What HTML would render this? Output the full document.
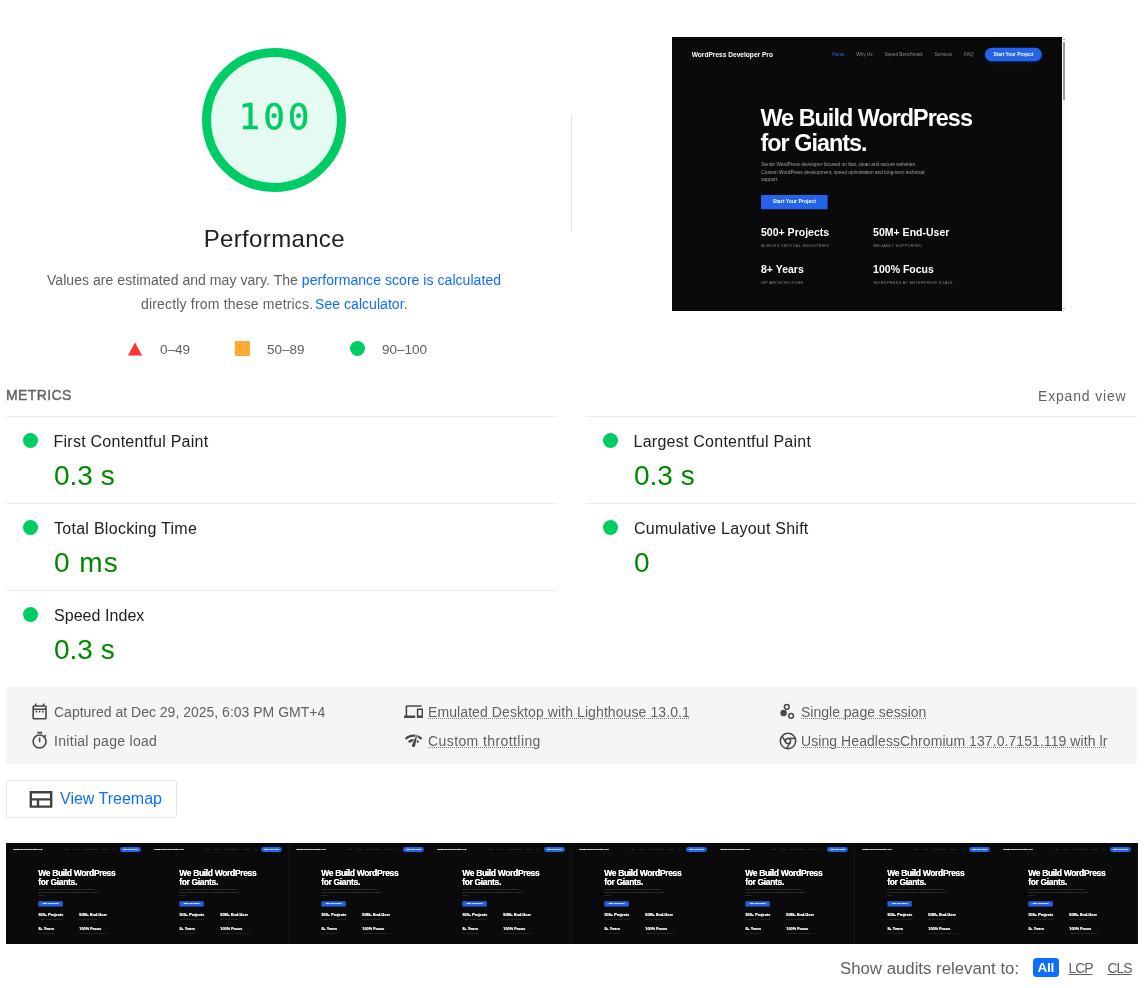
<!DOCTYPE html>
<html lang="en">
<head>
<meta charset="utf-8">
<title>Lighthouse Report</title>
<style>
html,body{margin:0;padding:0;background:#fff;}
body{width:1144px;height:988px;position:relative;overflow:hidden;font-family:"Liberation Sans",sans-serif;color:#212121;}
.t{position:absolute;white-space:nowrap;line-height:1;margin:0;padding:0;}
.abs{position:absolute;}
a{text-decoration:none;color:#0d6efd;}

/* gauge */
#gauge{left:202px;top:48px;width:144px;height:144px;}
#score{left:203.5px;width:144px;text-align:center;top:98.5px;font-family:"DejaVu Sans Mono","Liberation Mono",monospace;font-size:36px;letter-spacing:3px;color:#0c6;-webkit-text-stroke:.35px #0c6;}
#title{left:174.3px;width:200px;text-align:center;top:227px;font-size:24px;letter-spacing:.35px;color:#212121;}
.desc{font-size:14px;color:#616161;letter-spacing:.05px;}
.leg{font-size:13.5px;color:#616161;top:342.5px;}

/* metrics */
.hdr{font-size:14px;color:#616161;letter-spacing:.4px;font-weight:normal;-webkit-text-stroke:.4px #616161;}
.line{position:absolute;height:1px;background:#ebebeb;}
.dot{position:absolute;width:15px;height:15px;border-radius:50%;background:#0c6;}
.mt{font-size:16px;color:#212121;}
.mv{font-size:28px;color:#080;}

/* meta */
#meta{left:6px;top:687px;width:1131px;height:77px;background:#f5f5f5;border-radius:3px;}
.mi{font-size:14px;color:#616161;}
.mi u{text-decoration:underline dotted #7a7a7a;text-decoration-thickness:1px;text-underline-offset:1px;}

.ic{width:19.2px;height:19.2px;fill:#474747;}
/* site mock */
.shot{position:absolute;overflow:hidden;background:#0a0a0a;}
.site{position:absolute;left:0;top:0;width:1335px;height:940px;background:#0a0a0a;transform-origin:0 0;font-family:"Liberation Sans",sans-serif;}
.site .t{color:#fff;}
.site .nav{position:absolute;left:0;top:0;width:1335px;height:119px;border-bottom:1px solid #1c1c1c;}
.site .lnk{font-size:16px;color:#8c8c8c;top:52px;}
.site .pill{position:absolute;left:1072px;top:37px;width:195px;height:46px;border-radius:23px;background:#2563eb;box-shadow:0 4px 12px rgba(37,99,235,.22);}
.site .h1{font-size:80px;font-weight:bold;letter-spacing:-3.3px;left:303px;}
.site .p{font-size:16.35px;color:#a3a3a3;left:306px;}
.site .btn{position:absolute;left:305px;top:541px;width:228px;height:49px;background:#2563eb;border-radius:2px;}
.site .st{font-size:36px;font-weight:bold;}
.site .sl{font-size:13px;color:#8a8a8a;letter-spacing:1.25px;}
.big .site{transform:scale(.2919);}
.film .site{transform:scale(.1064,.1077);}
.film .t{text-shadow:0 0 4px currentColor;}
.film .p{color:#6a6a6a;text-shadow:none;}
.film .sl{color:#585858;text-shadow:none;}
.film .lnk{color:#5c5c5c;text-shadow:none;}
</style>
</head>
<body>
<div id="root" style="position:absolute;left:0;top:0;width:1144px;height:988px;will-change:transform;">

<!-- gauge -->
<svg id="gauge" class="abs" viewBox="0 0 120 120"><circle cx="60" cy="60" r="56.2" fill="#e5faf0" stroke="#0c6" stroke-width="7.6"/></svg>
<div id="score" class="t">100</div>
<div id="title" class="t">Performance</div>
<div class="t desc" style="left:47px;top:273px;">Values are estimated and may vary. The <a>performance score is calculated</a></div>
<div class="t desc" style="left:141px;top:297px;letter-spacing:.18px;">directly from these metrics.</div>
<div class="t desc" style="left:315px;top:297px;"><a>See calculator.</a></div>

<!-- legend -->
<svg class="abs" style="left:128px;top:342px;width:14px;height:14px;" viewBox="0 0 14 14"><polygon points="7,0.3 14,13.6 0,13.6" fill="#f33"/></svg>
<div class="t leg" style="left:160px;">0–49</div>
<div class="abs" style="left:235px;top:341px;width:15px;height:15px;background:#fa3;"></div>
<div class="t leg" style="left:267px;">50–89</div>
<div class="abs" style="left:350px;top:341px;width:15px;height:15px;border-radius:50%;background:#0c6;"></div>
<div class="t leg" style="left:382px;">90–100</div>

<!-- divider -->
<div class="abs" style="left:571px;top:116px;width:1px;height:115px;background:#e0e0e0;"></div>

<!-- big screenshot -->
<div class="shot big" style="left:672px;top:37px;width:389.7px;height:273.8px;">
<div class="site">
<div class="nav"></div>
<div class="t" style="left:67.5px;top:49px;font-size:22.6px;font-weight:bold;">WordPress Developer Pro</div>
<div class="t lnk" style="left:549px;color:#2f6fe0;">Home</div>
<div class="t lnk" style="left:631px;">Why Us</div>
<div class="t lnk" style="left:728px;">Speed Benchmark</div>
<div class="t lnk" style="left:899px;">Services</div>
<div class="t lnk" style="left:1001px;">FAQ</div>
<div class="pill"></div>
<div class="t" style="left:1072px;width:195px;text-align:center;top:51.5px;font-size:16.3px;font-weight:bold;">Start Your Project</div>
<div class="t h1" style="top:238.5px;">We Build WordPress</div>
<div class="t h1" style="top:323px;">for Giants.</div>
<div class="t p" style="top:427px;">Senior WordPress developer focused on fast, clean and secure websites.</div>
<div class="t p" style="top:454px;">Custom WordPress development, speed optimization and long-term technical</div>
<div class="t p" style="top:481px;">support.</div>
<div class="btn"></div>
<div class="t" style="left:305px;width:228px;text-align:center;top:556px;font-size:17.6px;font-weight:bold;">Start Your Project</div>
<div class="t st" style="left:305px;top:651px;">500+ Projects</div>
<div class="t st" style="left:689px;top:651px;">50M+ End-User</div>
<div class="t sl" style="left:306px;top:708px;">ACROSS CRITICAL INDUSTRIES</div>
<div class="t sl" style="left:690px;top:708px;">RELIABLY SUPPORTED</div>
<div class="t st" style="left:305px;top:778px;">8+ Years</div>
<div class="t st" style="left:689px;top:778px;">100% Focus</div>
<div class="t sl" style="left:306px;top:834px;">WP ARCHITECTURE</div>
<div class="t sl" style="left:690px;top:834px;">WORDPRESS AT ENTERPRISE SCALE</div>
</div>
</div>
<div class="abs" style="left:1062px;top:37px;width:4.3px;height:274px;background:#fcfcfc;"></div>
<div class="abs" style="left:1062.8px;top:42px;width:2.3px;height:57.6px;background:#9a9a9a;"></div>
<div class="abs" style="left:1063.3px;top:39px;width:1.4px;height:1px;background:#a0a0a0;"></div>
<div class="abs" style="left:1063.3px;top:307.5px;width:1.4px;height:1px;background:#a0a0a0;"></div>

<!-- metrics -->
<div class="t hdr" style="left:6px;top:388px;">METRICS</div>
<div class="t" style="left:1038px;top:389px;font-size:14px;color:#616161;letter-spacing:.83px;">Expand view</div>

<div class="line" style="left:6px;top:416px;width:551px;"></div>
<div class="line" style="left:6px;top:503px;width:551px;"></div>
<div class="line" style="left:6px;top:590px;width:551px;"></div>
<div class="line" style="left:586px;top:416px;width:551px;"></div>
<div class="line" style="left:586px;top:503px;width:551px;"></div>

<div class="dot" style="left:23px;top:433px;"></div>
<div class="t mt" style="left:53.5px;top:434px;letter-spacing:.25px;">First Contentful Paint</div>
<div class="t mv" style="left:54px;top:462px;">0.3 s</div>

<div class="dot" style="left:23px;top:520px;"></div>
<div class="t mt" style="left:54px;top:521px;letter-spacing:.28px;">Total Blocking Time</div>
<div class="t mv" style="left:54px;top:549px;letter-spacing:1px;">0 ms</div>

<div class="dot" style="left:23px;top:607px;"></div>
<div class="t mt" style="left:54px;top:608px;letter-spacing:.05px;">Speed Index</div>
<div class="t mv" style="left:54px;top:636px;">0.3 s</div>

<div class="dot" style="left:603px;top:433px;"></div>
<div class="t mt" style="left:633.5px;top:434px;letter-spacing:.25px;">Largest Contentful Paint</div>
<div class="t mv" style="left:634px;top:462px;">0.3 s</div>

<div class="dot" style="left:603px;top:520px;"></div>
<div class="t mt" style="left:634px;top:521px;letter-spacing:.24px;">Cumulative Layout Shift</div>
<div class="t mv" style="left:634px;top:549px;">0</div>

<!-- meta -->
<div id="meta" class="abs"></div>
<div class="t mi" style="left:54px;top:705px;">Captured at Dec 29, 2025, 6:03 PM GMT+4</div>
<div class="t mi" style="left:54px;top:734px;letter-spacing:.3px;">Initial page load</div>
<div class="t mi" style="left:428px;top:705px;letter-spacing:.09px;"><u>Emulated Desktop with Lighthouse 13.0.1</u></div>
<div class="t mi" style="left:428px;top:734px;letter-spacing:.41px;"><u>Custom throttling</u></div>
<div class="t mi" style="left:801px;top:705px;"><u>Single page session</u></div>
<div class="t mi" style="left:801px;top:734px;letter-spacing:.07px;"><u>Using HeadlessChromium 137.0.7151.119 with lr</u></div>

<!-- meta icons -->
<svg class="abs ic" style="left:29.8px;top:701.5px;" viewBox="0 0 24 24"><path d="M7 11h2v2H7v-2zm14-5v14c0 1.1-.9 2-2 2H5c-1.1 0-2-.9-2-2l.01-14c0-1.1.88-2 1.99-2h1V2h2v2h8V2h2v2h1c1.1 0 2 .9 2 2zM5 8h14V6H5v2zm14 12V10H5v10h14zm-4-7h2v-2h-2v2zm-4 0h2v-2h-2v2z"/></svg>
<svg class="abs ic" style="left:30.1px;top:731.1px;" viewBox="0 0 24 24"><path d="M15 1H9v2h6V1zm-4 13h2V8h-2v6zm8.03-6.61l1.42-1.42c-.43-.51-.9-.99-1.41-1.41l-1.42 1.42C16.07 4.74 14.12 4 12 4c-4.97 0-9 4.03-9 9s4.02 9 9 9 9-4.03 9-9c0-2.12-.74-4.07-1.97-5.61zM12 20c-3.87 0-7-3.13-7-7s3.13-7 7-7 7 3.13 7 7-3.13 7-7 7z"/></svg>
<svg class="abs ic" style="left:404.1px;top:701.9px;" viewBox="0 0 24 24"><path d="M4 6h18V4H4c-1.1 0-2 .9-2 2v11H0v3h14v-3H4V6zm19 2h-6c-.55 0-1 .45-1 1v10c0 .55.45 1 1 1h6c.55 0 1-.45 1-1V9c0-.55-.45-1-1-1zm-1 9h-4v-7h4v7z"/></svg>
<svg class="abs ic" style="left:404px;top:730.6px;" viewBox="0 0 24 24"><path d="M15.9 5c-.17 0-.32.09-.41.23l-.07.15-5.18 11.65c-.16.29-.26.61-.26.96 0 1.11.9 2.01 2.01 2.01.96 0 1.77-.68 1.96-1.59l.01-.03L16.4 5.5c0-.28-.22-.5-.5-.5zM1 9l2 2c2.88-2.88 6.79-4.08 10.53-3.62l1.19-2.68C9.89 3.84 4.74 5.27 1 9zm20 2l2-2c-1.64-1.64-3.55-2.82-5.59-3.57l-.53 2.82c1.5.62 2.9 1.53 4.12 2.75zm-4 4l2-2c-.8-.8-1.7-1.42-2.66-1.89l-.55 2.92c.42.27.83.59 1.21.97zM5 13l2 2c1.13-1.13 2.56-1.79 4.03-2l1.28-2.88c-2.63-.08-5.3.87-7.31 2.88z"/></svg>
<svg class="abs" style="left:778px;top:701px;width:20px;height:20px;" viewBox="0 0 20 20"><circle cx="8.8" cy="5.8" r="2.4" fill="none" stroke="#474747" stroke-width="1.5"/><circle cx="5.6" cy="12" r="3.2" fill="#474747"/><circle cx="13.1" cy="14.8" r="2.4" fill="none" stroke="#474747" stroke-width="1.5"/></svg>
<svg class="abs" style="left:778.4px;top:731.1px;width:20px;height:20px;" viewBox="-10 -10 20 20" fill="none" stroke="#474747" stroke-width="1.5"><circle r="7.7"/><circle r="2.6"/><path d="M0-2.6H7.2"/><path d="M0-2.6H7.2" transform="rotate(120)"/><path d="M0-2.6H7.2" transform="rotate(240)"/></svg>

<!-- treemap button -->
<div class="abs" style="left:6px;top:780px;width:169px;height:35.5px;border:1px solid #e4e4e4;border-radius:3px;background:#fff;"></div>
<svg class="abs" style="left:25.8px;top:784.6px;width:28.8px;height:28.8px;" viewBox="0 0 24 24"><path fill="#424242" d="M3 5v14h19V5H3zm2 2h15v4H5V7zm0 10v-4h4v4H5zm6 0v-4h9v4h-9z"/></svg>
<div class="t" style="left:60px;top:791px;font-size:16px;color:#0d6efd;">View Treemap</div>

<!-- filmstrip -->
<div class="abs" style="left:6px;top:843px;width:1132px;height:100.7px;background:#131313;"></div>
<div class="shot film" style="left:6.00px;top:843px;width:140.75px;height:100.7px;"><div class="site">
<div class="nav"></div>
<div class="t" style="left:67.5px;top:49px;font-size:22.6px;font-weight:bold;">WordPress Developer Pro</div>
<div class="t lnk" style="left:549px;color:#2f6fe0;">Home</div>
<div class="t lnk" style="left:631px;">Why Us</div>
<div class="t lnk" style="left:728px;">Speed Benchmark</div>
<div class="t lnk" style="left:899px;">Services</div>
<div class="t lnk" style="left:1001px;">FAQ</div>
<div class="pill"></div>
<div class="t" style="left:1072px;width:195px;text-align:center;top:51.5px;font-size:16.3px;font-weight:bold;">Start Your Project</div>
<div class="t h1" style="top:238.5px;">We Build WordPress</div>
<div class="t h1" style="top:323px;">for Giants.</div>
<div class="t p" style="top:427px;">Senior WordPress developer focused on fast, clean and secure websites.</div>
<div class="t p" style="top:454px;">Custom WordPress development, speed optimization and long-term technical</div>
<div class="t p" style="top:481px;">support.</div>
<div class="btn"></div>
<div class="t" style="left:305px;width:228px;text-align:center;top:556px;font-size:17.6px;font-weight:bold;">Start Your Project</div>
<div class="t st" style="left:305px;top:651px;">500+ Projects</div>
<div class="t st" style="left:689px;top:651px;">50M+ End-User</div>
<div class="t sl" style="left:306px;top:708px;">ACROSS CRITICAL INDUSTRIES</div>
<div class="t sl" style="left:690px;top:708px;">RELIABLY SUPPORTED</div>
<div class="t st" style="left:305px;top:778px;">8+ Years</div>
<div class="t st" style="left:689px;top:778px;">100% Focus</div>
<div class="t sl" style="left:306px;top:834px;">WP ARCHITECTURE</div>
<div class="t sl" style="left:690px;top:834px;">WORDPRESS AT ENTERPRISE SCALE</div>
</div></div>
<div class="shot film" style="left:146.75px;top:843px;width:140.75px;height:100.7px;"><div class="site">
<div class="nav"></div>
<div class="t" style="left:67.5px;top:49px;font-size:22.6px;font-weight:bold;">WordPress Developer Pro</div>
<div class="t lnk" style="left:549px;color:#2f6fe0;">Home</div>
<div class="t lnk" style="left:631px;">Why Us</div>
<div class="t lnk" style="left:728px;">Speed Benchmark</div>
<div class="t lnk" style="left:899px;">Services</div>
<div class="t lnk" style="left:1001px;">FAQ</div>
<div class="pill"></div>
<div class="t" style="left:1072px;width:195px;text-align:center;top:51.5px;font-size:16.3px;font-weight:bold;">Start Your Project</div>
<div class="t h1" style="top:238.5px;">We Build WordPress</div>
<div class="t h1" style="top:323px;">for Giants.</div>
<div class="t p" style="top:427px;">Senior WordPress developer focused on fast, clean and secure websites.</div>
<div class="t p" style="top:454px;">Custom WordPress development, speed optimization and long-term technical</div>
<div class="t p" style="top:481px;">support.</div>
<div class="btn"></div>
<div class="t" style="left:305px;width:228px;text-align:center;top:556px;font-size:17.6px;font-weight:bold;">Start Your Project</div>
<div class="t st" style="left:305px;top:651px;">500+ Projects</div>
<div class="t st" style="left:689px;top:651px;">50M+ End-User</div>
<div class="t sl" style="left:306px;top:708px;">ACROSS CRITICAL INDUSTRIES</div>
<div class="t sl" style="left:690px;top:708px;">RELIABLY SUPPORTED</div>
<div class="t st" style="left:305px;top:778px;">8+ Years</div>
<div class="t st" style="left:689px;top:778px;">100% Focus</div>
<div class="t sl" style="left:306px;top:834px;">WP ARCHITECTURE</div>
<div class="t sl" style="left:690px;top:834px;">WORDPRESS AT ENTERPRISE SCALE</div>
</div></div>
<div class="shot film" style="left:289.00px;top:843px;width:140.75px;height:100.7px;"><div class="site">
<div class="nav"></div>
<div class="t" style="left:67.5px;top:49px;font-size:22.6px;font-weight:bold;">WordPress Developer Pro</div>
<div class="t lnk" style="left:549px;color:#2f6fe0;">Home</div>
<div class="t lnk" style="left:631px;">Why Us</div>
<div class="t lnk" style="left:728px;">Speed Benchmark</div>
<div class="t lnk" style="left:899px;">Services</div>
<div class="t lnk" style="left:1001px;">FAQ</div>
<div class="pill"></div>
<div class="t" style="left:1072px;width:195px;text-align:center;top:51.5px;font-size:16.3px;font-weight:bold;">Start Your Project</div>
<div class="t h1" style="top:238.5px;">We Build WordPress</div>
<div class="t h1" style="top:323px;">for Giants.</div>
<div class="t p" style="top:427px;">Senior WordPress developer focused on fast, clean and secure websites.</div>
<div class="t p" style="top:454px;">Custom WordPress development, speed optimization and long-term technical</div>
<div class="t p" style="top:481px;">support.</div>
<div class="btn"></div>
<div class="t" style="left:305px;width:228px;text-align:center;top:556px;font-size:17.6px;font-weight:bold;">Start Your Project</div>
<div class="t st" style="left:305px;top:651px;">500+ Projects</div>
<div class="t st" style="left:689px;top:651px;">50M+ End-User</div>
<div class="t sl" style="left:306px;top:708px;">ACROSS CRITICAL INDUSTRIES</div>
<div class="t sl" style="left:690px;top:708px;">RELIABLY SUPPORTED</div>
<div class="t st" style="left:305px;top:778px;">8+ Years</div>
<div class="t st" style="left:689px;top:778px;">100% Focus</div>
<div class="t sl" style="left:306px;top:834px;">WP ARCHITECTURE</div>
<div class="t sl" style="left:690px;top:834px;">WORDPRESS AT ENTERPRISE SCALE</div>
</div></div>
<div class="shot film" style="left:429.75px;top:843px;width:140.75px;height:100.7px;"><div class="site">
<div class="nav"></div>
<div class="t" style="left:67.5px;top:49px;font-size:22.6px;font-weight:bold;">WordPress Developer Pro</div>
<div class="t lnk" style="left:549px;color:#2f6fe0;">Home</div>
<div class="t lnk" style="left:631px;">Why Us</div>
<div class="t lnk" style="left:728px;">Speed Benchmark</div>
<div class="t lnk" style="left:899px;">Services</div>
<div class="t lnk" style="left:1001px;">FAQ</div>
<div class="pill"></div>
<div class="t" style="left:1072px;width:195px;text-align:center;top:51.5px;font-size:16.3px;font-weight:bold;">Start Your Project</div>
<div class="t h1" style="top:238.5px;">We Build WordPress</div>
<div class="t h1" style="top:323px;">for Giants.</div>
<div class="t p" style="top:427px;">Senior WordPress developer focused on fast, clean and secure websites.</div>
<div class="t p" style="top:454px;">Custom WordPress development, speed optimization and long-term technical</div>
<div class="t p" style="top:481px;">support.</div>
<div class="btn"></div>
<div class="t" style="left:305px;width:228px;text-align:center;top:556px;font-size:17.6px;font-weight:bold;">Start Your Project</div>
<div class="t st" style="left:305px;top:651px;">500+ Projects</div>
<div class="t st" style="left:689px;top:651px;">50M+ End-User</div>
<div class="t sl" style="left:306px;top:708px;">ACROSS CRITICAL INDUSTRIES</div>
<div class="t sl" style="left:690px;top:708px;">RELIABLY SUPPORTED</div>
<div class="t st" style="left:305px;top:778px;">8+ Years</div>
<div class="t st" style="left:689px;top:778px;">100% Focus</div>
<div class="t sl" style="left:306px;top:834px;">WP ARCHITECTURE</div>
<div class="t sl" style="left:690px;top:834px;">WORDPRESS AT ENTERPRISE SCALE</div>
</div></div>
<div class="shot film" style="left:572.00px;top:843px;width:140.75px;height:100.7px;"><div class="site">
<div class="nav"></div>
<div class="t" style="left:67.5px;top:49px;font-size:22.6px;font-weight:bold;">WordPress Developer Pro</div>
<div class="t lnk" style="left:549px;color:#2f6fe0;">Home</div>
<div class="t lnk" style="left:631px;">Why Us</div>
<div class="t lnk" style="left:728px;">Speed Benchmark</div>
<div class="t lnk" style="left:899px;">Services</div>
<div class="t lnk" style="left:1001px;">FAQ</div>
<div class="pill"></div>
<div class="t" style="left:1072px;width:195px;text-align:center;top:51.5px;font-size:16.3px;font-weight:bold;">Start Your Project</div>
<div class="t h1" style="top:238.5px;">We Build WordPress</div>
<div class="t h1" style="top:323px;">for Giants.</div>
<div class="t p" style="top:427px;">Senior WordPress developer focused on fast, clean and secure websites.</div>
<div class="t p" style="top:454px;">Custom WordPress development, speed optimization and long-term technical</div>
<div class="t p" style="top:481px;">support.</div>
<div class="btn"></div>
<div class="t" style="left:305px;width:228px;text-align:center;top:556px;font-size:17.6px;font-weight:bold;">Start Your Project</div>
<div class="t st" style="left:305px;top:651px;">500+ Projects</div>
<div class="t st" style="left:689px;top:651px;">50M+ End-User</div>
<div class="t sl" style="left:306px;top:708px;">ACROSS CRITICAL INDUSTRIES</div>
<div class="t sl" style="left:690px;top:708px;">RELIABLY SUPPORTED</div>
<div class="t st" style="left:305px;top:778px;">8+ Years</div>
<div class="t st" style="left:689px;top:778px;">100% Focus</div>
<div class="t sl" style="left:306px;top:834px;">WP ARCHITECTURE</div>
<div class="t sl" style="left:690px;top:834px;">WORDPRESS AT ENTERPRISE SCALE</div>
</div></div>
<div class="shot film" style="left:712.75px;top:843px;width:140.75px;height:100.7px;"><div class="site">
<div class="nav"></div>
<div class="t" style="left:67.5px;top:49px;font-size:22.6px;font-weight:bold;">WordPress Developer Pro</div>
<div class="t lnk" style="left:549px;color:#2f6fe0;">Home</div>
<div class="t lnk" style="left:631px;">Why Us</div>
<div class="t lnk" style="left:728px;">Speed Benchmark</div>
<div class="t lnk" style="left:899px;">Services</div>
<div class="t lnk" style="left:1001px;">FAQ</div>
<div class="pill"></div>
<div class="t" style="left:1072px;width:195px;text-align:center;top:51.5px;font-size:16.3px;font-weight:bold;">Start Your Project</div>
<div class="t h1" style="top:238.5px;">We Build WordPress</div>
<div class="t h1" style="top:323px;">for Giants.</div>
<div class="t p" style="top:427px;">Senior WordPress developer focused on fast, clean and secure websites.</div>
<div class="t p" style="top:454px;">Custom WordPress development, speed optimization and long-term technical</div>
<div class="t p" style="top:481px;">support.</div>
<div class="btn"></div>
<div class="t" style="left:305px;width:228px;text-align:center;top:556px;font-size:17.6px;font-weight:bold;">Start Your Project</div>
<div class="t st" style="left:305px;top:651px;">500+ Projects</div>
<div class="t st" style="left:689px;top:651px;">50M+ End-User</div>
<div class="t sl" style="left:306px;top:708px;">ACROSS CRITICAL INDUSTRIES</div>
<div class="t sl" style="left:690px;top:708px;">RELIABLY SUPPORTED</div>
<div class="t st" style="left:305px;top:778px;">8+ Years</div>
<div class="t st" style="left:689px;top:778px;">100% Focus</div>
<div class="t sl" style="left:306px;top:834px;">WP ARCHITECTURE</div>
<div class="t sl" style="left:690px;top:834px;">WORDPRESS AT ENTERPRISE SCALE</div>
</div></div>
<div class="shot film" style="left:855.00px;top:843px;width:140.75px;height:100.7px;"><div class="site">
<div class="nav"></div>
<div class="t" style="left:67.5px;top:49px;font-size:22.6px;font-weight:bold;">WordPress Developer Pro</div>
<div class="t lnk" style="left:549px;color:#2f6fe0;">Home</div>
<div class="t lnk" style="left:631px;">Why Us</div>
<div class="t lnk" style="left:728px;">Speed Benchmark</div>
<div class="t lnk" style="left:899px;">Services</div>
<div class="t lnk" style="left:1001px;">FAQ</div>
<div class="pill"></div>
<div class="t" style="left:1072px;width:195px;text-align:center;top:51.5px;font-size:16.3px;font-weight:bold;">Start Your Project</div>
<div class="t h1" style="top:238.5px;">We Build WordPress</div>
<div class="t h1" style="top:323px;">for Giants.</div>
<div class="t p" style="top:427px;">Senior WordPress developer focused on fast, clean and secure websites.</div>
<div class="t p" style="top:454px;">Custom WordPress development, speed optimization and long-term technical</div>
<div class="t p" style="top:481px;">support.</div>
<div class="btn"></div>
<div class="t" style="left:305px;width:228px;text-align:center;top:556px;font-size:17.6px;font-weight:bold;">Start Your Project</div>
<div class="t st" style="left:305px;top:651px;">500+ Projects</div>
<div class="t st" style="left:689px;top:651px;">50M+ End-User</div>
<div class="t sl" style="left:306px;top:708px;">ACROSS CRITICAL INDUSTRIES</div>
<div class="t sl" style="left:690px;top:708px;">RELIABLY SUPPORTED</div>
<div class="t st" style="left:305px;top:778px;">8+ Years</div>
<div class="t st" style="left:689px;top:778px;">100% Focus</div>
<div class="t sl" style="left:306px;top:834px;">WP ARCHITECTURE</div>
<div class="t sl" style="left:690px;top:834px;">WORDPRESS AT ENTERPRISE SCALE</div>
</div></div>
<div class="shot film" style="left:995.75px;top:843px;width:140.75px;height:100.7px;"><div class="site">
<div class="nav"></div>
<div class="t" style="left:67.5px;top:49px;font-size:22.6px;font-weight:bold;">WordPress Developer Pro</div>
<div class="t lnk" style="left:549px;color:#2f6fe0;">Home</div>
<div class="t lnk" style="left:631px;">Why Us</div>
<div class="t lnk" style="left:728px;">Speed Benchmark</div>
<div class="t lnk" style="left:899px;">Services</div>
<div class="t lnk" style="left:1001px;">FAQ</div>
<div class="pill"></div>
<div class="t" style="left:1072px;width:195px;text-align:center;top:51.5px;font-size:16.3px;font-weight:bold;">Start Your Project</div>
<div class="t h1" style="top:238.5px;">We Build WordPress</div>
<div class="t h1" style="top:323px;">for Giants.</div>
<div class="t p" style="top:427px;">Senior WordPress developer focused on fast, clean and secure websites.</div>
<div class="t p" style="top:454px;">Custom WordPress development, speed optimization and long-term technical</div>
<div class="t p" style="top:481px;">support.</div>
<div class="btn"></div>
<div class="t" style="left:305px;width:228px;text-align:center;top:556px;font-size:17.6px;font-weight:bold;">Start Your Project</div>
<div class="t st" style="left:305px;top:651px;">500+ Projects</div>
<div class="t st" style="left:689px;top:651px;">50M+ End-User</div>
<div class="t sl" style="left:306px;top:708px;">ACROSS CRITICAL INDUSTRIES</div>
<div class="t sl" style="left:690px;top:708px;">RELIABLY SUPPORTED</div>
<div class="t st" style="left:305px;top:778px;">8+ Years</div>
<div class="t st" style="left:689px;top:778px;">100% Focus</div>
<div class="t sl" style="left:306px;top:834px;">WP ARCHITECTURE</div>
<div class="t sl" style="left:690px;top:834px;">WORDPRESS AT ENTERPRISE SCALE</div>
</div></div>

<!-- show audits -->
<div class="t" style="left:840px;top:961px;font-size:16.8px;color:#616161;">Show audits relevant to:</div>
<div class="abs" style="left:1033px;top:958px;width:25.6px;height:18.6px;border-radius:3.5px;background:#0d6efd;"></div>
<div class="t" style="left:1037.6px;top:960.5px;font-size:13.6px;color:#fff;font-weight:bold;letter-spacing:-.3px;">All</div>
<div class="t" style="left:1068.5px;top:960.5px;font-size:14px;letter-spacing:-1.1px;color:#616161;text-decoration:underline;">LCP</div>
<div class="t" style="left:1107.5px;top:960.5px;font-size:14px;letter-spacing:-1.1px;color:#616161;text-decoration:underline;">CLS</div>

</div>
</body>
</html>
